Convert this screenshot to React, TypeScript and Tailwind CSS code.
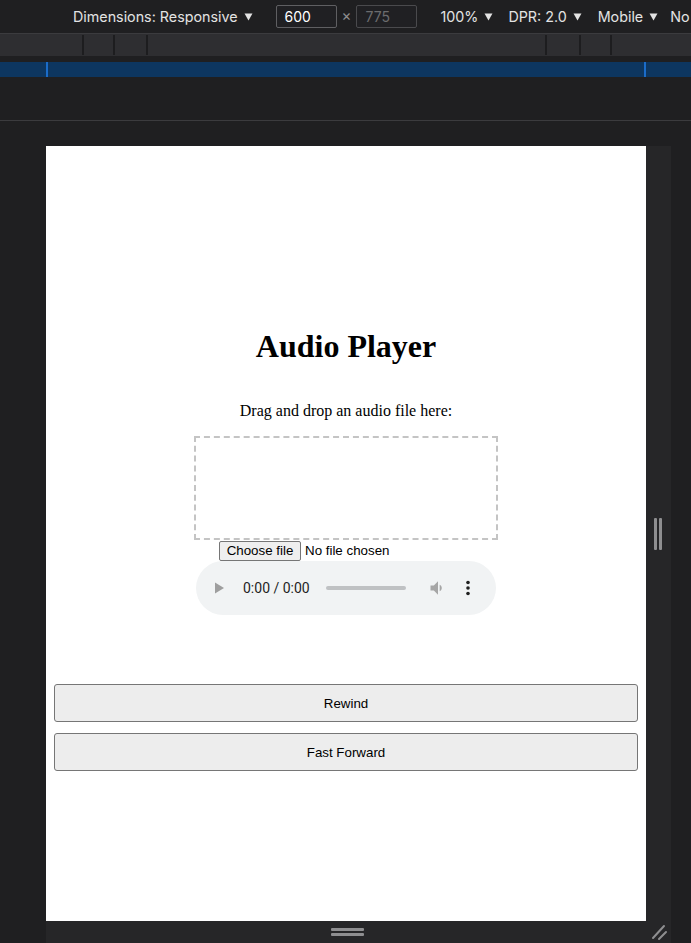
import React from "react";

const Caret = () => (
  <svg width="9" height="8" viewBox="0 0 9 8" className="ml-[6px] inline-block shrink-0">
    <path d="M0.5 0.5h8L4.5 7.5z" fill="#e3e3e3" />
  </svg>
);

function Toolbar() {
  return (
    <div className="h-[33px] flex items-center whitespace-nowrap overflow-hidden text-[#e3e3e3] text-[14.3px] font-['Inter','Liberation_Sans',sans-serif]">
      <div className="ml-[73px] shrink-0 flex items-center">
        Dimensions: Responsive
        <Caret />
      </div>
      <div className="ml-[23px] shrink-0 w-[61px] h-[23px] border border-[#5f5f62] rounded-[2px] bg-[#202023] flex items-center pl-[8px] text-white text-[14px]">
        600
      </div>
      <span className="mx-[5px] shrink-0 text-[#8e8e8e] text-[15px]">×</span>
      <div className="shrink-0 w-[61px] h-[23px] border border-[#4a4a4d] rounded-[2px] bg-[#202023] flex items-center pl-[8px] text-[#6c6c6e] text-[14px]">
        775
      </div>
      <div className="ml-[23px] shrink-0 flex items-center">
        100%
        <Caret />
      </div>
      <div className="ml-[15px] shrink-0 flex items-center">
        DPR: 2.0
        <Caret />
      </div>
      <div className="ml-[16px] shrink-0 flex items-center">
        Mobile
        <Caret />
      </div>
      <div className="ml-[12px] shrink-0">No throttling</div>
    </div>
  );
}

function Ruler() {
  return (
    <div className="h-[22px] bg-[#2e2e31] flex">
      <div className="w-[82px]" />
      <div className="w-[2px] my-[1px] bg-[#1d1d1f]" />
      <div className="w-[29px]" />
      <div className="w-[2px] my-[1px] bg-[#1d1d1f]" />
      <div className="w-[31px]" />
      <div className="w-[2px] my-[1px] bg-[#1d1d1f]" />
      <div className="w-[397px]" />
      <div className="w-[2px] my-[1px] bg-[#1d1d1f]" />
      <div className="w-[32px]" />
      <div className="w-[2px] my-[1px] bg-[#1d1d1f]" />
      <div className="w-[29px]" />
      <div className="w-[2px] my-[1px] bg-[#1d1d1f]" />
    </div>
  );
}

function BlueBar() {
  return (
    <div className="h-[15px] bg-[#0d3660] flex">
      <div className="w-[46px]" />
      <div className="w-[2px] bg-[#1b6cc9]" />
      <div className="w-[596px]" />
      <div className="w-[2px] bg-[#1b6cc9]" />
    </div>
  );
}

function AudioControls() {
  return (
    <div className="w-[300px] h-[54px] rounded-full bg-[#f1f3f4] flex items-center font-['Roboto','Liberation_Sans',sans-serif]">
      <svg width="12" height="12" viewBox="0 0 12 12" className="ml-[18px]">
        <path d="M1 0.5v11l9-5.5z" fill="#9e9e9e" />
      </svg>
      <span className="ml-[17px] text-[14px] text-[#1f1f1f]">0:00 / 0:00</span>
      <div className="ml-[16px] w-[80px] h-[4px] rounded-full bg-[#bfc1c3]" />
      <svg width="20" height="20" viewBox="0 0 24 24" className="ml-[22px]">
        <path d="M3 9v6h4l5 5V4L7 9H3z" fill="#a6a6a6" />
        <path d="M16.5 12c0-1.77-1-3.29-2.5-4.03v8.05c1.48-.73 2.5-2.25 2.5-4.02z" fill="#a6a6a6" />
      </svg>
      <svg width="6" height="16" viewBox="0 0 6 16" className="ml-[17px]">
        <circle cx="3" cy="2.5" r="1.8" fill="#1f1f1f" />
        <circle cx="3" cy="8" r="1.8" fill="#1f1f1f" />
        <circle cx="3" cy="13.5" r="1.8" fill="#1f1f1f" />
      </svg>
    </div>
  );
}

function Page() {
  return (
    <div className="w-[600px] h-[775px] bg-white flex flex-col items-center text-black">
      <h1 className="mt-[182px] text-[32px] leading-[37px] font-bold font-['Liberation_Serif',serif]">
        Audio Player
      </h1>
      <p className="mt-[37px] text-[16px] leading-[18px] font-['Liberation_Serif',serif]">
        Drag and drop an audio file here:
      </p>
      <div className="mt-[16px] w-[304px] h-[104px] border-2 border-dashed border-[#c4c4c4]" />
      <div className="w-[252px] h-[21px] flex items-center font-['Liberation_Sans',sans-serif] text-[13.33px]">
        <div className="ml-[-1px] w-[82px] h-[20px] border border-[#767676] rounded-[2px] bg-[#efefef] flex items-center justify-center">
          Choose file
        </div>
        <span className="ml-[4px]">No file chosen</span>
      </div>
      <AudioControls />
      <div className="mt-[69px] w-full px-[8px] flex flex-col gap-[11px] font-['Liberation_Sans',sans-serif] text-[13.33px]">
        <button className="h-[38px] w-full pt-[1px] border border-[#767676] rounded-[3px] bg-[#ededed] text-black">
          Rewind
        </button>
        <button className="h-[38px] w-full pt-[1px] border border-[#767676] rounded-[3px] bg-[#ededed] text-black">
          Fast Forward
        </button>
      </div>
    </div>
  );
}

export default function App() {
  return (
    <div className="w-[691px] h-[943px] bg-[#1f1f21] overflow-hidden flex flex-col">
      <Toolbar />
      <div className="h-[1px] bg-[#3b3b3e]" />
      <Ruler />
      <div className="h-[6px]" />
      <BlueBar />
      <div className="h-[43px]" />
      <div className="h-[1px] bg-[#3b3b3e]" />
      <div className="h-[25px]" />
      <div className="ml-[46px] w-[625px] h-[797px] bg-[#262628] grid grid-cols-[600px_25px] grid-rows-[775px_22px]">
        <Page />
        <div className="flex items-center justify-center gap-[2px] pr-[2px]">
          <div className="w-[3px] h-[32px] rounded-[1px] bg-[#8e8e90]" />
          <div className="w-[3px] h-[32px] rounded-[1px] bg-[#8e8e90]" />
        </div>
        <div className="flex flex-col items-center justify-center gap-[2px] pl-[2px]">
          <div className="w-[33px] h-[3px] rounded-[1px] bg-[#8e8e90]" />
          <div className="w-[33px] h-[3px] rounded-[1px] bg-[#8e8e90]" />
        </div>
        <div className="flex items-end justify-center pb-[2px]">
          <svg width="18" height="18" viewBox="0 0 18 18">
            <path d="M3 15L14 3M9 16L16 9" stroke="#8e8e90" strokeWidth="2" strokeLinecap="round" />
          </svg>
        </div>
      </div>
    </div>
  );
}
